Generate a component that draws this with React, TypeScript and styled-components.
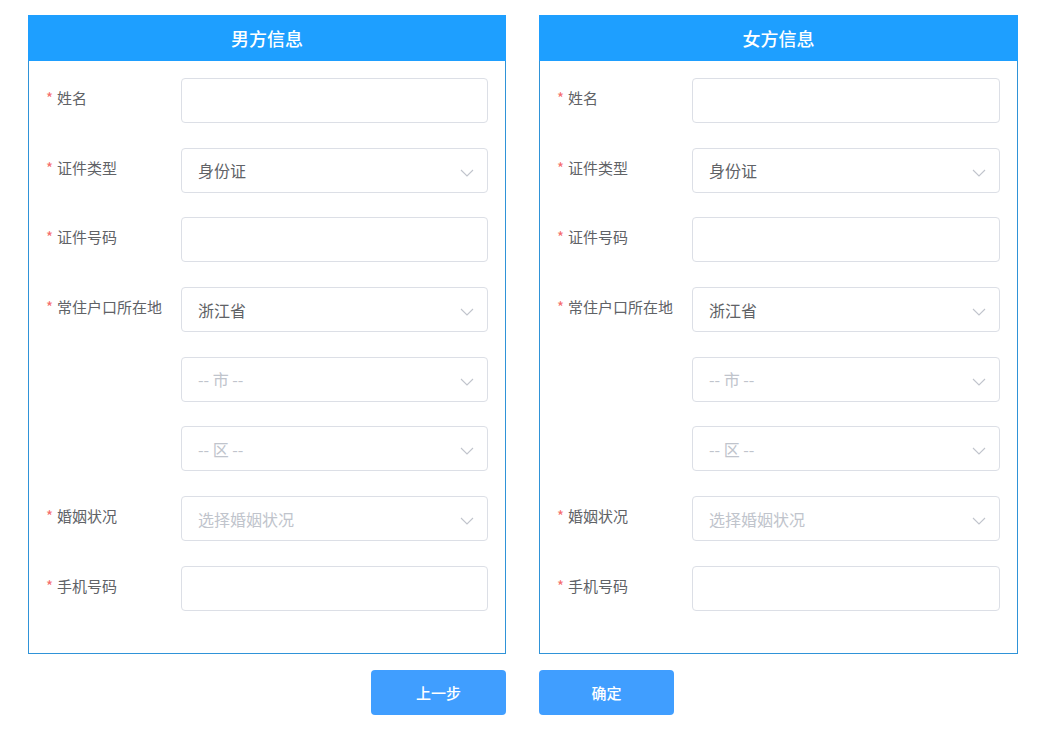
import React from "react";
import styled, { createGlobalStyle } from "styled-components";

const GlobalStyle = createGlobalStyle`
  html, body {
    margin: 0;
    padding: 0;
    background: #fff;
    font-family: "Microsoft YaHei", "Noto Sans CJK SC", "Liberation Sans", sans-serif;
  }
  * {
    box-sizing: border-box;
  }
`;

interface Field {
  label?: string;
  kind: "input" | "select";
  value?: string;
  placeholder?: string;
}

const fields: Field[] = [
  { label: "姓名", kind: "input" },
  { label: "证件类型", kind: "select", value: "身份证" },
  { label: "证件号码", kind: "input" },
  { label: "常住户口所在地", kind: "select", value: "浙江省" },
  { kind: "select", placeholder: "-- 市 --" },
  { kind: "select", placeholder: "-- 区 --" },
  { label: "婚姻状况", kind: "select", placeholder: "选择婚姻状况" },
  { label: "手机号码", kind: "input" },
];

const Chevron = () => (
  <ArrowIcon width="14" height="8" viewBox="0 0 14 8">
    <path d="M1 1 L7 7 L13 1" fill="none" stroke="#c0c4cc" strokeWidth="1.1" />
  </ArrowIcon>
);

const Panel: React.FC<{ title: string }> = ({ title }) => (
  <Card>
    <CardHeader>{title}</CardHeader>
    <CardBody>
      {fields.map((f, idx) => (
        <Row key={idx}>
          <Label>
            {f.label && (
              <>
                <Star>*</Star>
                {f.label}
              </>
            )}
          </Label>
          <Control>
            {f.value && <Value>{f.value}</Value>}
            {f.placeholder && <Placeholder>{f.placeholder}</Placeholder>}
            {f.kind === "select" && <Chevron />}
          </Control>
        </Row>
      ))}
    </CardBody>
  </Card>
);

const App = () => (
  <>
    <GlobalStyle />
    <Page>
      <Columns>
        <Panel title="男方信息" />
        <Panel title="女方信息" />
      </Columns>
      <Actions>
        <Button side="left">上一步</Button>
        <Button side="right">确定</Button>
      </Actions>
    </Page>
  </>
);

export default App;

const Page = styled.div`
  width: 990px;
  margin: 0 0 0 28px;
  padding-top: 15px;
`;

const Columns = styled.div`
  display: grid;
  grid-template-columns: 478px 479px;
  column-gap: 33px;
`;

const Card = styled.div`
  border: 1px solid #2f93d8;
  border-top: none;
  height: 639px;
`;

const CardHeader = styled.div`
  height: 46px;
  margin: 0 -1px;
  background: #1e9fff;
  color: #fff;
  font-size: 18px;
  font-weight: 500;
  display: flex;
  align-items: center;
  justify-content: center;
`;

const CardBody = styled.div`
  padding: 17px 17px 0 17px;
  display: flex;
  flex-direction: column;
  gap: 24.7px;
`;

const Row = styled.div`
  display: flex;
  align-items: flex-start;
`;

const Label = styled.div`
  width: 135px;
  flex-shrink: 0;
  padding-top: 10px;
  font-size: 15px;
  line-height: 20px;
  color: #606266;
  white-space: nowrap;
`;

const Star = styled.span`
  color: #f56c6c;
  margin-right: 4px;
`;

const Control = styled.div`
  position: relative;
  flex: 1;
  height: 45px;
  border: 1px solid #dcdfe6;
  border-radius: 4px;
  padding: 0 16px;
  display: flex;
  align-items: center;
  font-size: 16px;
`;

const Value = styled.span`
  color: #606266;
`;

const Placeholder = styled.span`
  color: #c0c4cc;
`;

const ArrowIcon = styled.svg`
  position: absolute;
  right: 13px;
  top: 20px;
`;

const Actions = styled.div`
  display: grid;
  grid-template-columns: 478px 479px;
  column-gap: 33px;
  margin-top: 16px;
`;

const Button = styled.div<{ side: "left" | "right" }>`
  justify-self: ${(props) => (props.side === "left" ? "end" : "start")};
  width: 135px;
  height: 45px;
  border-radius: 4px;
  background: #409eff;
  color: #fff;
  font-size: 15px;
  font-weight: 500;
  display: flex;
  align-items: center;
  justify-content: center;
`;
